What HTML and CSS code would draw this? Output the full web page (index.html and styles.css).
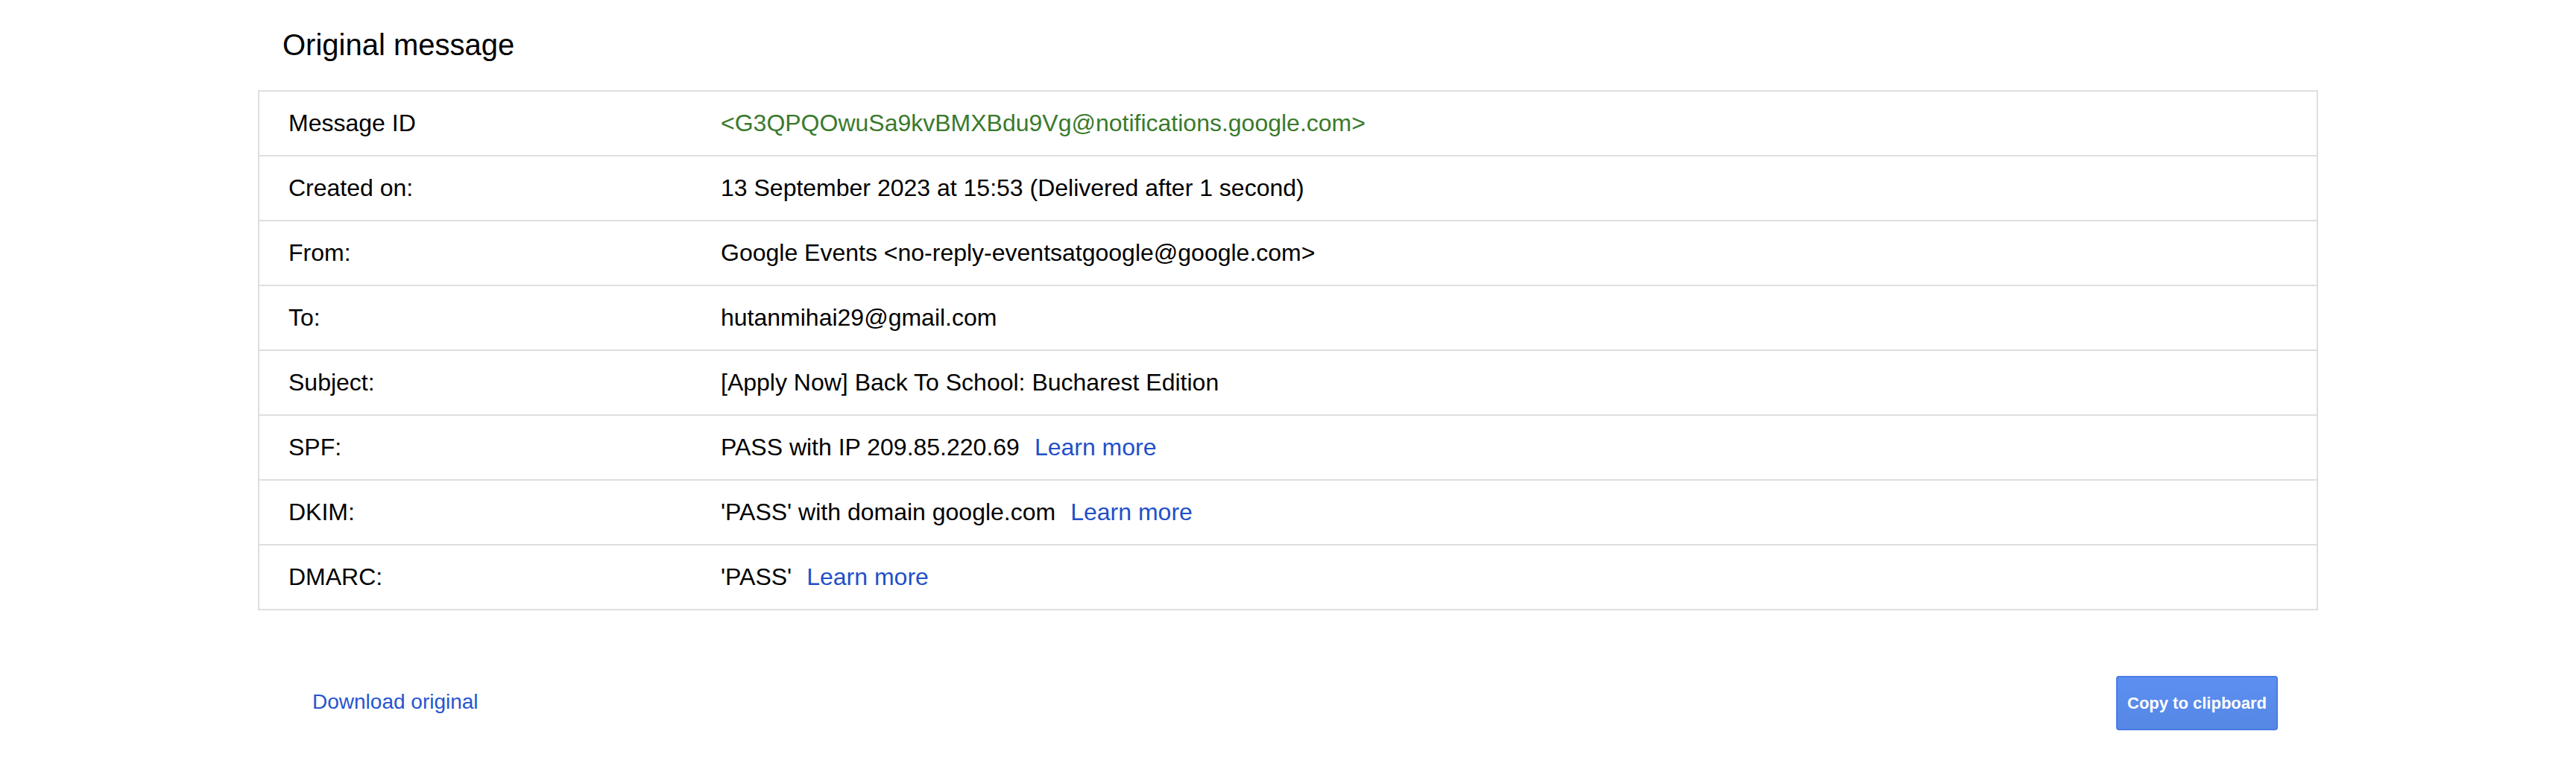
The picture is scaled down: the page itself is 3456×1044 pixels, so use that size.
FILE: index.html
```html
<!DOCTYPE html>
<html lang="en">
<head>
<meta charset="utf-8">
<title>Original message</title>
<link rel="stylesheet" href="styles.css">
</head>
<body>
<div class="page">
  <h1 class="title">Original message</h1>
  <div class="table">
    <div class="row"><div class="label">Message ID</div><div class="value msgid">&lt;G3QPQOwuSa9kvBMXBdu9Vg@notifications.google.com&gt;</div></div>
    <div class="row"><div class="label">Created on:</div><div class="value">13 September 2023 at 15:53 (Delivered after 1 second)</div></div>
    <div class="row"><div class="label">From:</div><div class="value">Google Events &lt;no-reply-eventsatgoogle@google.com&gt;</div></div>
    <div class="row"><div class="label">To:</div><div class="value">hutanmihai29@gmail.com</div></div>
    <div class="row"><div class="label">Subject:</div><div class="value">[Apply Now] Back To School: Bucharest Edition</div></div>
    <div class="row"><div class="label">SPF:</div><div class="value">PASS with IP 209.85.220.69<a class="learn" href="#">Learn more</a></div></div>
    <div class="row"><div class="label">DKIM:</div><div class="value">'PASS' with domain google.com<a class="learn" href="#">Learn more</a></div></div>
    <div class="row"><div class="label">DMARC:</div><div class="value">'PASS'<a class="learn" href="#">Learn more</a></div></div>
  </div>
  <div class="footer">
    <a class="download" href="#">Download original</a>
    <button class="copy" type="button">Copy to clipboard</button>
  </div>
</div>
</body>
</html>
```
FILE: styles.css
```css
html, body {
  margin: 0;
  padding: 0;
  background: #ffffff;
}
body {
  font-family: "Liberation Sans", Arial, Helvetica, sans-serif;
  color: #000000;
}
.page {
  width: 2764px;
  margin: 0 auto;
}
.title {
  margin: 0;
  padding: 37px 0 0 33px;
  font-size: 40px;
  font-weight: normal;
  line-height: 46px;
  height: 46px;
  margin-bottom: 38px;
}
.table {
  border: 2px solid #dedede;
  border-bottom: none;
}
.row {
  display: grid;
  grid-template-columns: 619px 1fr;
  border-bottom: 2px solid #dedede;
  font-size: 32px;
  line-height: 37px;
}
.label {
  padding: 24px 0 24px 39px;
}
.value {
  padding: 24px 0;
}
.msgid {
  color: #3a7a2c;
}
.learn {
  color: #2150c8;
  text-decoration: none;
  margin-left: 20px;
}
.footer {
  display: flex;
  align-items: baseline;
  justify-content: space-between;
  margin-top: 88px;
  padding: 0 54px 0 73px;
}
.download {
  font-size: 28px;
  color: #2755cf;
  text-decoration: none;
}
.copy {
  font-family: "Liberation Sans", Arial, Helvetica, sans-serif;
  font-size: 22px;
  font-weight: bold;
  color: #ffffff;
  line-height: 25px;
  padding: 22px 13px 22px;
  border: 2px solid #4a7ce4;
  border-radius: 4px;
  background: linear-gradient(to bottom, #5c8ff1, #5687e5);
  cursor: pointer;
}
```
